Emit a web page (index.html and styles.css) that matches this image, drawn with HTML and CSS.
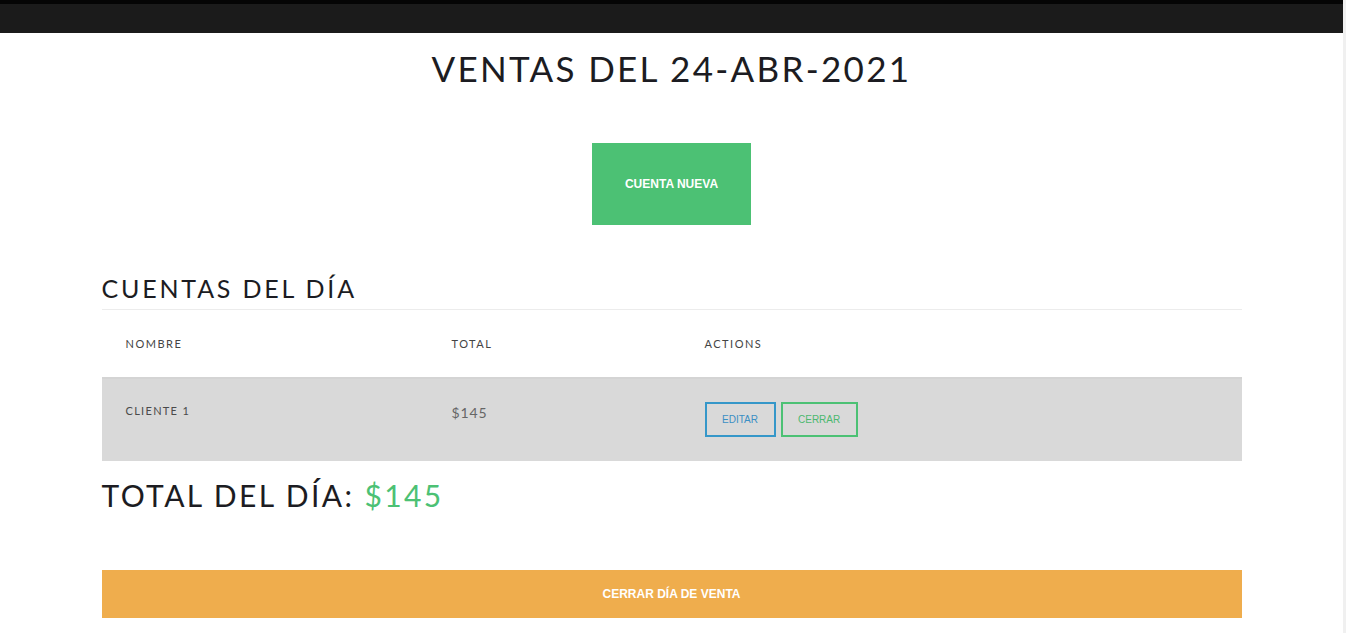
FILE: index.html
```html
<!DOCTYPE html>
<html lang="es">
<head>
<meta charset="utf-8">
<title>Ventas</title>
<link rel="stylesheet" href="styles.css">
</head>
<body>
<header class="topbar"></header>
<main class="container">
  <h1 class="title">VENTAS DEL 24-ABR-2021</h1>
  <div class="new-wrap">
    <button class="btn-new">CUENTA NUEVA</button>
  </div>
  <h2 class="subtitle">CUENTAS DEL DÍA</h2>
  <table class="table">
    <thead>
      <tr>
        <th class="c1">NOMBRE</th>
        <th class="c2">TOTAL</th>
        <th class="c3">ACTIONS</th>
      </tr>
    </thead>
    <tbody>
      <tr class="row">
        <td class="name">CLIENTE 1</td>
        <td class="amount">$145</td>
        <td class="actions">
          <button class="btn-outline blue">EDITAR</button>
          <button class="btn-outline green">CERRAR</button>
        </td>
      </tr>
    </tbody>
  </table>
  <h2 class="total">TOTAL DEL DÍA: <span class="total-val">$145</span></h2>
  <button class="btn-close-day">CERRAR DÍA DE VENTA</button>
</main>
</body>
</html>
```
FILE: styles.css
```css
html, body {
  margin: 0;
  padding: 0;
  background: #fff;
}
body {
  font-family: "Lato", "Noto Sans", sans-serif;
  color: #1a1a1a;
  border-right: 3px solid #f0f0f0;
  min-height: 633px;
  box-sizing: border-box;
}
.topbar {
  height: 29px;
  background: #1b1b1b;
  border-top: 4px solid #050505;
}
.container {
  width: 1140px;
  margin: 0 auto;
  display: flex;
  flex-direction: column;
}
.title {
  margin: 15px 0 0;
  text-align: center;
  font-family: "Lato", sans-serif;
  font-weight: 400;
  font-size: 35px;
  line-height: 40px;
  letter-spacing: 2.3px;
  color: #1c1c22;
}
.new-wrap {
  display: flex;
  justify-content: center;
  margin-top: 55px;
}
.btn-new {
  width: 159px;
  height: 82px;
  background: #4cc174;
  color: #fff;
  border: none;
  font-family: "Liberation Sans", Arial, sans-serif;
  font-weight: 700;
  font-size: 12px;
  letter-spacing: 0;
  padding: 0;
}
.subtitle {
  margin: 48px 0 0;
  font-family: "Lato", sans-serif;
  font-weight: 400;
  font-size: 25px;
  line-height: 30px;
  letter-spacing: 2.8px;
  color: #1c1c22;
  padding-bottom: 6px;
  border-bottom: 1px solid #ececec;
}
.table {
  border-collapse: collapse;
  width: 1140px;
  table-layout: fixed;
}
.table th {
  text-align: left;
  font-family: "Lato", sans-serif;
  font-weight: 400;
  font-size: 11px;
  letter-spacing: 1.5px;
  color: #444;
  padding: 0 24px 1px;
  height: 66px;
  border-bottom: 2px solid #d4d4d4;
}
.c1 { width: 278px; }
.c2 { width: 205px; }
.row {
  height: 83px;
}
.table td {
  background: #d9d9d9;
  padding: 0 24px;
  vertical-align: top;
  font-family: "Lato", sans-serif;
  color: #4a4a4a;
}
.table td.name {
  font-size: 11px;
  letter-spacing: 1.3px;
  padding-top: 25px;
  line-height: 14px;
}
.table td.amount {
  font-size: 14px;
  letter-spacing: 0.9px;
  padding-top: 25px;
  line-height: 18px;
  color: #666;
}
.table td.actions {
  padding-top: 23px;
  line-height: 0;
}
.btn-outline {
  height: 35px;
  background: transparent;
  font-family: "Liberation Sans", Arial, sans-serif;
  font-size: 10px;
  padding: 0;
  margin: 0;
  vertical-align: top;
}
.btn-outline.blue {
  width: 71px;
  border: 2px solid #3597c9;
  color: #3a8fc4;
  margin-right: 1px;
}
.btn-outline.green {
  width: 77px;
  border: 2px solid #4cc174;
  color: #4cb86f;
}
.total {
  margin: 16px 0 0;
  font-family: "Lato", sans-serif;
  font-weight: 400;
  font-size: 30px;
  line-height: 36px;
  letter-spacing: 2.4px;
  color: #1c1c22;
}
.total-val {
  color: #4cc174;
}
.btn-close-day {
  margin-top: 57px;
  width: 1140px;
  height: 48px;
  border: none;
  background: #efad4d;
  color: #fff;
  font-family: "Liberation Sans", Arial, sans-serif;
  font-weight: 700;
  font-size: 12px;
  letter-spacing: 0;
  padding: 0;
}
```
